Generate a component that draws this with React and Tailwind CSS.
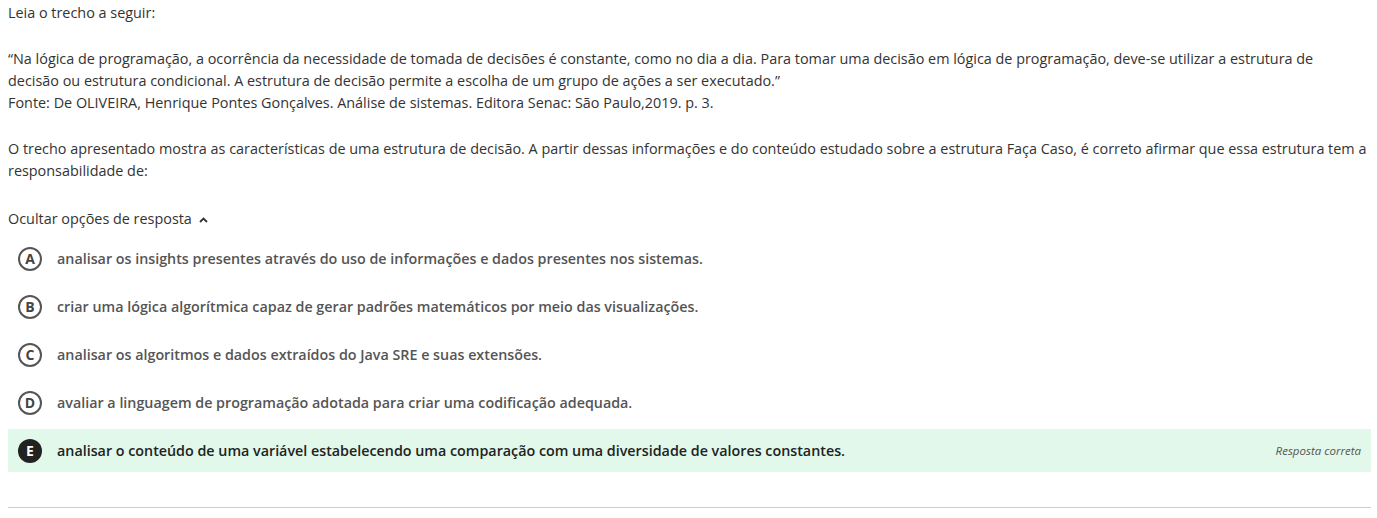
const options = [
  { letter: 'A', text: 'analisar os insights presentes através do uso de informações e dados presentes nos sistemas.' },
  { letter: 'B', text: 'criar uma lógica algorítmica capaz de gerar padrões matemáticos por meio das visualizações.' },
  { letter: 'C', text: 'analisar os algoritmos e dados extraídos do Java SRE e suas extensões.' },
  { letter: 'D', text: 'avaliar a linguagem de programação adotada para criar uma codificação adequada.' },
  { letter: 'E', text: 'analisar o conteúdo de uma variável estabelecendo uma comparação com uma diversidade de valores constantes.', correct: true },
];

export default function App() {
  return (
    <div className="bg-white w-[1377px] h-[518px] overflow-hidden pl-2 pr-[6px] pt-[2px] text-[14.4px] leading-[22px] text-[#333] font-['Open_Sans',sans-serif]">
      <p>Leia o trecho a seguir:</p>

      <div className="mt-[24px]">
        <p className="pr-[40px]">
          “Na lógica de programação, a ocorrência da necessidade de tomada de decisões é constante, como no dia a dia. Para tomar uma decisão em lógica de programação, deve-se utilizar a estrutura de decisão ou estrutura condicional. A estrutura de decisão permite a escolha de um grupo de ações a ser executado.”
        </p>
        <p>Fonte: De OLIVEIRA, Henrique Pontes Gonçalves. Análise de sistemas. Editora Senac: São Paulo,2019. p. 3.</p>
      </div>

      <p className="mt-[24px]">
        O trecho apresentado mostra as características de uma estrutura de decisão. A partir dessas informações e do conteúdo estudado sobre a estrutura Faça Caso, é correto afirmar que essa estrutura tem a responsabilidade de:
      </p>

      <div className="mt-[26px] flex items-center gap-[7px]">
        <span>Ocultar opções de resposta</span>
        <svg width="9" height="6" viewBox="0 0 9 6" className="mt-[2px]">
          <path d="M1 5 L4.5 1.5 L8 5" fill="none" stroke="#333" strokeWidth="1.8" />
        </svg>
      </div>

      <div className="mt-[7px] flex flex-col gap-[5px]">
        {options.map(({ letter, text, correct }) => (
          <div
            key={letter}
            className={
              correct
                ? 'h-[43px] flex items-center bg-[#e1f8eb] pl-[10px] pr-[10px]'
                : 'h-[43px] flex items-center pl-[10px] pr-[10px]'
            }
          >
            <span
              className={
                correct
                  ? 'w-[24px] h-[24px] rounded-full bg-[#222] text-white flex items-center justify-center font-bold text-[14px] shrink-0'
                  : 'w-[24px] h-[24px] rounded-full border-2 border-[#555] text-[#444] flex items-center justify-center font-bold text-[14px] shrink-0'
              }
            >
              {letter}
            </span>
            <span className={correct ? 'ml-[15px] font-semibold text-[14.3px] text-[#222] flex-1' : 'ml-[15px] font-semibold text-[14.3px] text-[#555] flex-1'}>
              {text}
            </span>
            {correct && (
              <span className="italic text-[11.5px] text-[#555]">Resposta correta</span>
            )}
          </div>
        ))}
      </div>

      <div className="mt-[35px] border-t border-[#ccc]" />
    </div>
  );
}
